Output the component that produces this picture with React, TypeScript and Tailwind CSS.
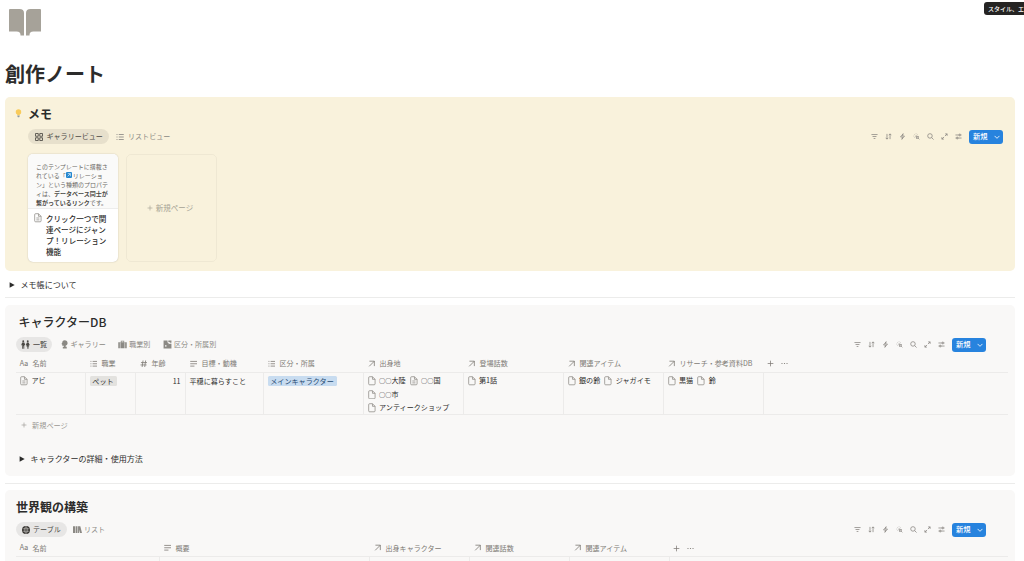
import React from "react";
import type { ReactNode } from "react";

const STROKE_ICONS = {
    filter: "M1 3.500h14M3.500 8h9M6 12.500h4",
    sort: "M4.500 2v12M1.500 11l3 3 3-3M11.500 14v-12M8.500 5l3-3 3 3",
    bolt: "M9.500 1.500L3.500 9H8l-1.500 5.500L12.500 7H8z",
    search: "M6.800 1.500a5.200 5.200 0 1 0 0 10.400 5.200 5.200 0 0 0 0-10.400zM10.500 10.500l4.500 4.500",
    expand: "M9.500 2h4.500v4.500M14 2l-5 5M6.500 14h-4.500v-4.500M2 14L7 9",
    settings: "M1 4.500h8M12.500 4.500H15M1 11.500h2.500M7 11.500h8M9.500 2.500H12v4H9.500zM4 9.500h2.500v4H4z",
    cursor: "M6.500 6.500l2.500 7 1.500-3 3-1.500zM11.500 11.500l3 3M7 1.500v1M3 3l.8.8M1.500 7h1M3 11l.8-.8M11 3l-.8.8",
    list: "M5.500 3h10M5.500 8h10M5.500 13h10M1 3h2M1 8h2M1 13h2",
    lines: "M.5 3h15M.5 8h15M.5 13h9",
    hash: "M6.500 1L4.500 15M12 1l-2 14M2 5.500h13M1 10.500h13",
    arrow: "M3 2.500h10.500V13M13.500 2.500L2.500 13.500",
    gallery: "M1 1h5.500v5.500H1zM9.500 1H15v5.500H9.500zM1 9.500h5.500V15H1zM9.500 9.500H15V15H9.500z",
    plus: "M8 1.500v13M1.500 8h13",
    dots: "M1 8h2.500M6.750 8h2.500M12.500 8H15",
    chevron: "M1.500 5L8 11.500 14.500 5",
};

type IconName = keyof typeof STROKE_ICONS;

function Icon({ name, className = "size-2", width = 1.7 }: { name: IconName; className?: string; width?: number }) {
    return (
        <svg viewBox="0 0 16 16" className={`shrink-0 ${className}`} fill="none" stroke="currentColor" strokeWidth={width}>
            <path d={STROKE_ICONS[name]} />
        </svg>
    );
}

function PageIcon({ filled = false }: { filled?: boolean }) {
    return (
        <svg viewBox="0 0 16 20" className="h-[9.5px] w-[8px] shrink-0 text-[#8d8b86]" fill="none" stroke="currentColor" strokeWidth="1.6">
            <path d="M3 1.500h6l5.500 5.500v9.500a2 2 0 0 1-2 2H3a2 2 0 0 1-2-2v-13a2 2 0 0 1 2-2zM9 1.500V7h5.500" />
            {filled && <path d="M4.500 10.500h6.500M4.500 14.500h6.500" />}
        </svg>
    );
}

// Solid glyphs used in front of the view names
const SOLID_ICONS = {
    people: "M4 .5a1.700 1.700 0 1 1 0 3.400A1.700 1.700 0 0 1 4 .5zM12 .5a1.700 1.700 0 1 1 0 3.400A1.700 1.700 0 0 1 12 .5zM2 4.500h4L7.500 9l-1 .8L5.800 8.500v7H4.300V11h-.6v4.500H2.200v-7L1.500 9.800.5 9zM10.500 4.500h3l2 4.500-1 .8-1-1.300 1 3H13.300v4h-1v-4h-.6v4h-1v-4H9.500l1-3-1 1.300-1-.8z",
    head: "M8 .5c3.500 0 5.500 2.300 5.500 5.200 0 2-1.500 3.800-3.500 4.300v2h2v3H5v-3h2v-2H4V8L2.500 7 4 5C4 2.300 5.500.5 8 .5z",
    bag: "M5 4V1.500h6V4h4.500v10.500h-2.800V4.500h-1v10H4.300v-10h-1v10H.5V4zM6.300 4h3.400V2.700H6.300z",
    puzzle: "M1 1h7v3.500l2 1v2l2-1h3v8.500H1zM9.500 1H15v4h-3V3.500H9.500zM4 9v3h2V9z",
    books: "M0 2h4v12H0zM5 2h3v12H5zM9 2h4l3 12h-3.500L11 8v6H9z",
};

function SolidIcon({ name }: { name: keyof typeof SOLID_ICONS }) {
    return (
        <svg viewBox="0 0 16 16" className="size-[9px] shrink-0" fill="currentColor" fillRule="evenodd">
            <path d={SOLID_ICONS[name]} />
        </svg>
    );
}

function GlobeIcon() {
    return (
        <svg viewBox="0 0 16 16" className="size-[8px] shrink-0">
            <circle cx="8" cy="8" r="8" fill="#32302c" />
            <path d="M1 5.500h14M1 10.500h14M8 1v14M8 1C3.500 5 3.500 11 8 15M8 1c4.500 4 4.500 10 0 14" fill="none" stroke="#e6e5e3" strokeWidth=".9" />
        </svg>
    );
}

function Tab({ icon, label, active = false, className = "" }: { icon: ReactNode; label: string; active?: boolean; className?: string }) {
    return (
        <div className={`flex h-[15.5px] items-center rounded-full ${active ? "bg-black/[0.07] text-[#4b4945]" : "text-[#8b8984]"} ${className}`}>
            {icon}
            <span>{label}</span>
        </div>
    );
}

const TOOLS: IconName[] = ["filter", "sort", "bolt", "cursor", "search", "expand", "settings"];

function Toolbar() {
    return (
        <div className="ml-auto flex items-center text-[#85827d]">
            {TOOLS.map((tool) => (
                <div key={tool} className="flex w-[14px] justify-center">
                    <Icon name={tool} className="size-[7px]" />
                </div>
            ))}
            <button className="ml-[3.5px] flex h-[14px] w-[34px] items-center justify-between rounded-[3px] bg-[#2783de] pr-[3px] pl-1 text-[7.3px] font-medium text-white">
                新規
                <Icon name="chevron" className="size-[6px]" width={2.2} />
            </button>
        </div>
    );
}

function HeaderCell({ icon, label, width }: { icon: IconName | "title"; label: string; width: string }) {
    return (
        <div className={`flex shrink-0 items-center pl-[4.5px] text-[#7d7a75] ${width}`}>
            {icon === "title" ? (
                <span className="mt-px -ml-[1px] w-[13px] font-['Inter'] text-[7px]">Aa</span>
            ) : (
                <Icon name={icon} className="mr-[4.5px] size-[7.5px]" />
            )}
            <span>{label}</span>
        </div>
    );
}

function HeaderEnd() {
    return (
        <div className="flex items-center gap-[7px] pl-[3px] text-[#7d7a75]">
            <Icon name="plus" className="size-[7px]" />
            <Icon name="dots" className="size-[7px]" width={2} />
        </div>
    );
}

function Relation({ label, filled, circles }: { label: string; filled?: boolean; circles?: boolean }) {
    return (
        <span className="flex h-[13.5px] items-center gap-[3.5px]">
            <PageIcon filled={filled} />
            <span className="flex items-center">
                {circles && <span className="text-[6.2px]">○○</span>}
                {label}
            </span>
        </span>
    );
}

function Toggle({ label, className = "" }: { label: string; className?: string }) {
    return (
        <div className={`flex h-3 items-center text-[8.05px] ${className}`}>
            <svg viewBox="0 0 10 10" className="size-[6px]" fill="#2c2c2b">
                <path d="M1 .5L9.500 5 1 9.500z" />
            </svg>
            {label}
        </div>
    );
}

function MemoSection() {
    return (
        <section className="mt-[11px] ml-[5px] h-[173.5px] w-[1010px] rounded-[5px] bg-[#f9f2dc] pt-[8px] pr-[12px] pl-[8px]">
            <div className="flex h-[17px] items-center">
                <svg viewBox="0 0 10 14" className="ml-[1.5px] h-[8.5px] w-[7px]">
                    <circle cx="5" cy="4.800" r="4.500" fill="#f9cb5b" />
                    <path d="M3 8h4v2.500H3z" fill="#f9cb5b" />
                    <path d="M3.200 10.500h3.600v2L6 13.500H4l-.8-1z" fill="#8e9aa0" />
                </svg>
                <h2 className="ml-[6.5px] text-[12px] leading-none font-bold">メモ</h2>
            </div>
            <div className="mt-[7px] ml-[15px] flex h-[15px] items-center">
                <Tab active icon={<Icon name="gallery" />} label="ギャラリービュー" className="w-[80.5px] gap-[4px] pl-[6.5px]" />
                <Tab icon={<Icon name="list" />} label="リストビュー" className="gap-[4px] pl-[7.5px]" />
                <Toolbar />
            </div>
            <div className="mt-[9.5px] ml-[15px] flex gap-[7.500px]">
                <div className="h-[108px] w-[90px] overflow-hidden rounded-[5px] bg-white shadow-[0_0_1.5px_rgba(0,0,0,0.25)]">
                    <div className="h-[55px] border-b border-black/5 bg-[#fafaf9] pt-[8px] pl-[8px] text-[6px] leading-[9px] whitespace-nowrap text-[#6b6965]">
                        <div className="h-[9px]">このテンプレートに搭載さ</div>
                        <div className="flex h-[9px] items-center">
                            れている「
                            <span className="mx-[.5px] flex size-[6px] items-center justify-center rounded-[1px] bg-[#2387cf] text-white">
                                <Icon name="arrow" className="size-[4px]" width={2.5} />
                            </span>
                            リレーショ
                        </div>
                        <div className="h-[9px]">ン」という種類のプロパテ</div>
                        <div className="h-[9px]">
                            ィは、<b className="text-[#4b4945]">データベース同士が</b>
                        </div>
                        <div className="h-[9px]">
                            <b className="text-[#4b4945]">繋がっているリンク</b>です。
                        </div>
                    </div>
                    <div className="flex pt-[4px] pl-[6px] text-[7.55px] leading-[11.2px] font-medium">
                        <div className="mr-[4px] flex h-[11px] items-center">
                            <PageIcon filled />
                        </div>
                        <div className="whitespace-nowrap">
                            クリック一つで関
                            <br />
                            連ページにジャン
                            <br />
                            プ！リレーション
                            <br />
                            機能
                        </div>
                    </div>
                </div>
                <div className="flex h-[108px] w-[91px] items-center justify-center gap-[3px] rounded-[5px] border border-black/[0.04] pr-[2px] text-[7.5px] text-[#a6a294]">
                    <Icon name="plus" className="size-[6px]" />
                    新規ページ
                </div>
            </div>
        </section>
    );
}

function CharacterSection() {
    return (
        <section className="ml-[5px] h-[171px] w-[1010px] rounded-[5px] bg-[#f9f8f7] pt-[8px] pr-[7px] pl-[11px]">
            <h2 className="ml-[2.5px] h-[17px] text-[12px] leading-[17px] font-medium">キャラクターDB</h2>
            <div className="mt-[7px] flex h-[15px] items-center pr-[22px]">
                <Tab active icon={<SolidIcon name="people" />} label="一覧" className="w-[36px] gap-[3px] pl-[5px] font-medium" />
                <Tab icon={<SolidIcon name="head" />} label="ギャラリー" className="gap-[2px] pl-[7.5px]" />
                <Tab icon={<SolidIcon name="bag" />} label="職業別" className="gap-[2px] pl-[12.5px]" />
                <Tab icon={<SolidIcon name="puzzle" />} label="区分・所属別" className="gap-[2px] pl-[12.5px]" />
                <Toolbar />
            </div>
            <div className="mt-[3px] flex h-[17.5px] border-b border-black/5">
                <HeaderCell icon="title" label="名前" width="w-[69px]" />
                <HeaderCell icon="list" label="職業" width="w-[50px]" />
                <HeaderCell icon="hash" label="年齢" width="w-[50px]" />
                <HeaderCell icon="lines" label="目標・動機" width="w-[78px]" />
                <HeaderCell icon="list" label="区分・所属" width="w-[100px]" />
                <HeaderCell icon="arrow" label="出身地" width="w-[100px]" />
                <HeaderCell icon="arrow" label="登場話数" width="w-[100px]" />
                <HeaderCell icon="arrow" label="関連アイテム" width="w-[100px]" />
                <HeaderCell icon="arrow" label="リサーチ・参考資料DB" width="w-[101px]" />
                <HeaderEnd />
            </div>
            <div className="flex h-[42.5px] border-b border-black/5 text-[7.1px] *:shrink-0 *:border-r *:border-black/5 *:pt-[1.500px] *:pl-[4px]">
                <div className="w-[69.5px]">
                    <Relation label="アビ" filled />
                </div>
                <div className="w-[50px]">
                    <span className="mt-[2px] flex h-[10px] w-[27px] items-center justify-center rounded-[1.5px] bg-[#e3e2df]">ペット</span>
                </div>
                <div className="w-[50px] pr-[4px] text-right leading-[14px]">11</div>
                <div className="w-[78px] leading-[14px]">平穏に暮らすこと</div>
                <div className="w-[100px]">
                    <span className="mt-[2px] flex h-[10px] w-[69px] items-center justify-center rounded-[1.5px] bg-[#c8dcf0] text-[#264a72]">
                        メインキャラクター
                    </span>
                </div>
                <div className="w-[100px]">
                    <div className="flex gap-[4px]">
                        <Relation circles label="大陸" />
                        <Relation circles label="国" filled />
                    </div>
                    <Relation circles label="市" />
                    <Relation label="アンティークショップ" />
                </div>
                <div className="w-[100px]">
                    <Relation label="第1話" />
                </div>
                <div className="flex w-[100px] gap-[4px]">
                    <Relation label="銀の鈴" />
                    <Relation label="ジャガイモ" />
                </div>
                <div className="flex w-[100.5px] gap-[4px]">
                    <Relation label="黒猫" />
                    <Relation label="鈴" />
                </div>
            </div>
            <div className="flex h-[20px] items-center gap-[5px] pl-[5px] text-[7.2px] text-[#9b9994]">
                <Icon name="plus" className="size-[6px]" />
                新規ページ
            </div>
            <Toggle label="キャラクターの詳細・使用方法" className="mt-[18px] gap-[5.5px] pl-[3px]" />
        </section>
    );
}

function WorldSection() {
    return (
        <section className="ml-[5px] h-[80px] w-[1010px] rounded-t-[5px] bg-[#f9f8f7] pt-[8px] pr-[7px] pl-[11px]">
            <h2 className="h-[17px] text-[12px] leading-[17px] font-bold">世界観の構築</h2>
            <div className="mt-[7px] flex h-[15px] items-center pr-[22px]">
                <Tab active icon={<GlobeIcon />} label="テーブル" className="w-[50.5px] gap-[3px] pl-[6px]" />
                <Tab icon={<SolidIcon name="books" />} label="リスト" className="gap-[2px] pl-[6.5px]" />
                <Toolbar />
            </div>
            <div className="mt-[3px] flex h-[17px] border-b border-black/5">
                <HeaderCell icon="title" label="名前" width="w-[143px]" />
                <HeaderCell icon="lines" label="概要" width="w-[210px]" />
                <HeaderCell icon="arrow" label="出身キャラクター" width="w-[100px]" />
                <HeaderCell icon="arrow" label="関連話数" width="w-[100px]" />
                <HeaderCell icon="arrow" label="関連アイテム" width="w-[101px]" />
                <HeaderEnd />
            </div>
            <div className="flex h-[13px] *:border-r *:border-black/5">
                <div className="w-[144px]" />
                <div className="w-[210px]" />
                <div className="w-[100px]" />
                <div className="w-[100px]" />
                <div className="w-[100px]" />
            </div>
        </section>
    );
}

export default function App() {
    return (
        <div className="relative h-[561px] w-[1024px] overflow-hidden bg-white font-['Noto_Sans_CJK_JP',sans-serif] text-[7.05px] whitespace-nowrap text-[#2c2c2b]">
            <div className="absolute top-[2px] right-0 h-[13px] w-[40px] rounded-l-[3px] bg-[#252423] pl-[4px] text-[6px] leading-[13px] font-medium text-white">
                スタイル、エ
            </div>
            <svg viewBox="0 0 32 27" className="mt-[9px] ml-[9px] h-[27px] w-8" fill="#a6a299">
                <path d="M0 1Q0 0 1 0h9.500Q15 0 15 4v22.500h-3.500q.3-4-4-4H0z" />
                <path d="M32 1Q32 0 31 0h-9.500Q17 0 17 4v22.500h3.500q-.3-4 4-4H32z" />
            </svg>
            <h1 className="mt-[24.5px] ml-[5px] h-[25.500px] text-[20px] leading-[26px] font-bold">創作ノート</h1>
            <MemoSection />
            <Toggle label="メモ帳について" className="mt-[8.5px] gap-[6px] pl-[8.5px]" />
            <hr className="mt-[6px] mr-[9px] ml-[5px] border-[#ececeb]" />
            <div className="h-[7px]" />
            <CharacterSection />
            <hr className="mt-[7px] mr-[9px] ml-[5px] border-[#ececeb]" />
            <div className="h-[6px]" />
            <WorldSection />
        </div>
    );
}
